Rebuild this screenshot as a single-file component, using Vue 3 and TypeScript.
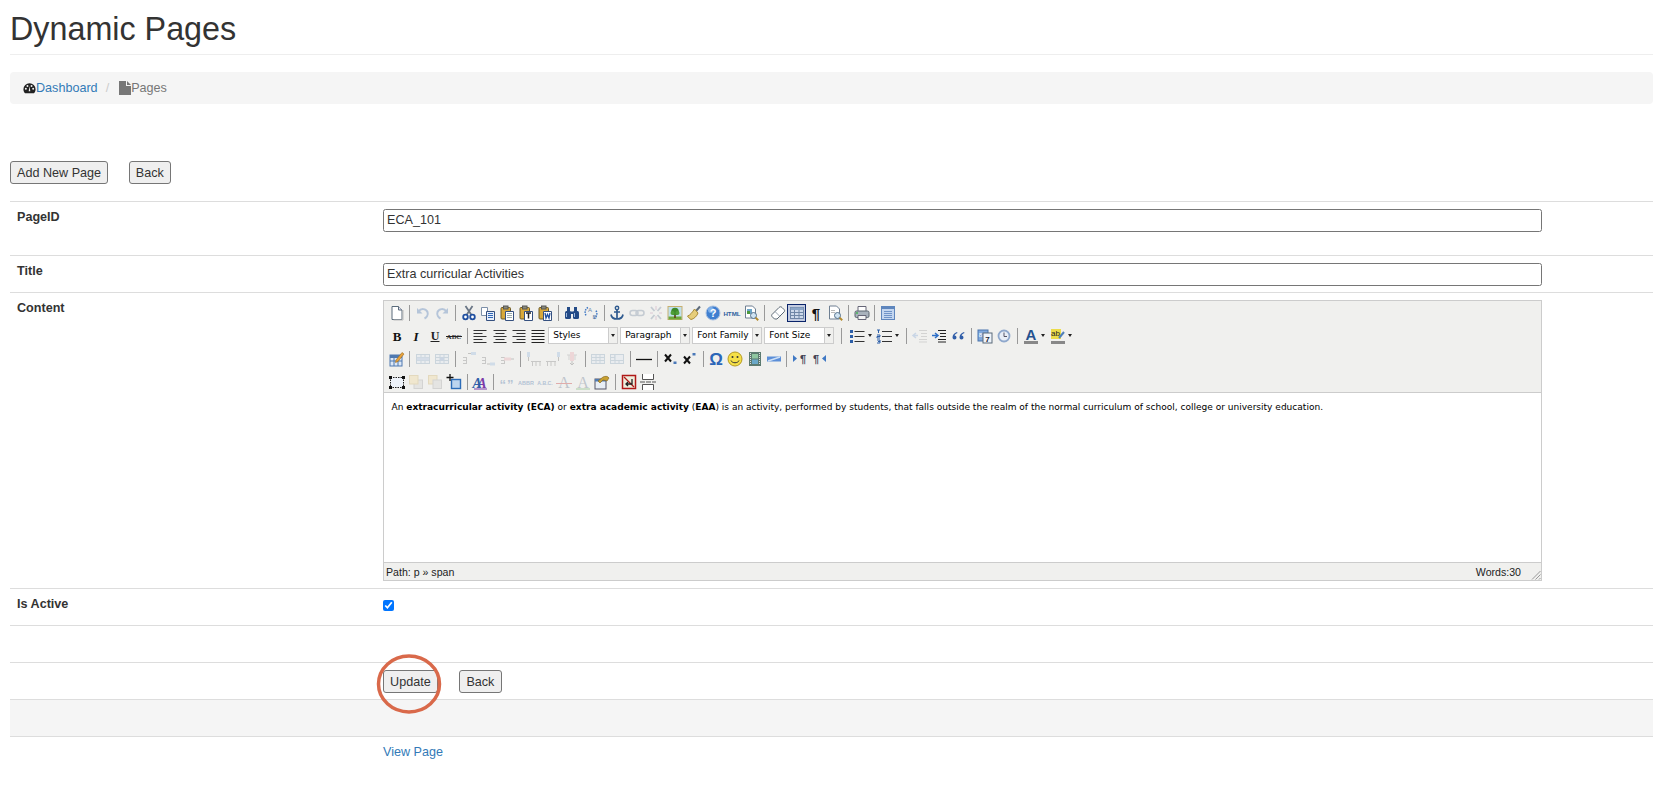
<script setup lang="ts">
type Item = { k: 'i'; n: string; off?: boolean; on?: boolean } | { k: 's' } | { k: 'sel'; t: string } | { k: 'arrow' }

const clip = (inner: string) =>
  `<rect x="2" y="2.5" width="9.5" height="11.5" rx="1" fill="#d9a93a" stroke="#6b5a28"/><rect x="4.5" y="1" width="4.5" height="3" fill="#8a8a7a" stroke="#555"/>${inner}`
const sheet = (fill = '#fff') =>
  `<path d="M6.5 6.5h8v9h-8z" fill="${fill}" stroke="#35507f"/>`
const mag = `<circle cx="10.5" cy="10.5" r="3" fill="#cfe3f2" stroke="#55708a"/><path d="M12.6 12.6l2.6 2.6" stroke="#b38a2d" stroke-width="2"/>`
const lines = (ys: number[], x: number, w: number, c = '#333') =>
  ys.map((y) => `<path d="M${x} ${y + 0.5}h${w}" stroke="${c}"/>`).join('')
const grid = `<rect x="1.5" y="3.5" width="13" height="9" fill="#dbe6f4" stroke="#7f9db9"/><path d="M1.5 6.5h13M1.5 9.5h13M6 3.5v9M10 3.5v9" stroke="#7f9db9"/>`
const ladder = (a: string) =>
  `<path d="M2 6.5h3M2 9.5h3M2 12.5h3M5.5 6v7" stroke="#777"/>${a}`

const icons: Record<string, string> = {
  new: `<path d="M3 1.5h6.5l3.5 3.5v9.5H3z" fill="#fff" stroke="#5a6b7b"/><path d="M9.5 1.5V5H13" fill="#dde" stroke="#5a6b7b"/><path d="M14 5v10H4.5" fill="none" stroke="#bbb"/>`,
  undo: `<path d="M3.5 6.5C6 3 11 3.5 12.5 7c1 3-1 5.5-3 6.5" fill="none" stroke="#3d6cb0" stroke-width="2"/><path d="M2 3v5.5h5.5z" fill="#3d6cb0"/>`,
  redo: `<path d="M12.5 6.5C10 3 5 3.5 3.5 7c-1 3 1 5.5 3 6.5" fill="none" stroke="#3d6cb0" stroke-width="2"/><path d="M14 3v5.5H8.5z" fill="#3d6cb0"/>`,
  cut: `<path d="M4.5 1l6 9M11.5 1l-6 9" stroke="#6a7686" stroke-width="1.8"/><circle cx="4.5" cy="12" r="2.3" fill="#fff" stroke="#1f4fa0" stroke-width="1.8"/><circle cx="11.5" cy="12" r="2.3" fill="#fff" stroke="#1f4fa0" stroke-width="1.8"/>`,
  copy: `<path d="M1.5 2.5h6v8h-6z" fill="#fff" stroke="#7c8fa8"/>${sheet('#e6eefa')}${lines([8, 10, 12], 8, 5, '#2f67b8')}`,
  paste: clip(`${sheet()}${lines([8, 10, 12], 8, 5, '#9aa')}`),
  ptext: clip(`${sheet()}<path d="M8 8h5M10.5 8v5.5" stroke="#222" stroke-width="1.5"/>`),
  pword: clip(`${sheet()}<path d="M8 8l1 5 1.5-3.5L12 13l1-5" fill="none" stroke="#1f4fa0" stroke-width="1.3"/>`),
  find: `<rect x="1" y="6" width="6" height="8" rx="1.5" fill="#234a86"/><rect x="9" y="6" width="6" height="8" rx="1.5" fill="#234a86"/><rect x="3" y="2" width="3" height="5" fill="#234a86"/><rect x="10" y="2" width="3" height="5" fill="#234a86"/><rect x="6" y="6.5" width="4" height="2.5" fill="#234a86"/><path d="M2.5 8v4M10.5 8v4" stroke="#9db7dc"/>`,
  replace: `<path d="M5 2.5c-3 1.5-3.5 5-2 8M11 13.5c3-1.5 3.5-5 2-8" fill="none" stroke="#3f78c4" stroke-width="1.5" stroke-dasharray="1.5 1"/><text x="5" y="6.5" font-size="6" fill="#6b85a8" font-family="Liberation Sans">A</text><text x="9.5" y="14" font-size="6" fill="#6b85a8" font-family="Liberation Sans">B</text>`,
  anchor: `<circle cx="8" cy="3" r="1.7" fill="none" stroke="#2f5a8f" stroke-width="1.4"/><path d="M8 4.5v9.5M5 7h6" stroke="#2f5a8f" stroke-width="1.7"/><path d="M2 9.5c.5 3 3 4.5 6 4.5s5.5-1.5 6-4.5" fill="none" stroke="#2f5a8f" stroke-width="1.7"/>`,
  link: `<rect x="1" y="5.5" width="8" height="5" rx="2.5" fill="none" stroke="#6a7f99" stroke-width="1.5"/><rect x="7" y="5.5" width="8" height="5" rx="2.5" fill="none" stroke="#6a7f99" stroke-width="1.5"/>`,
  unlink: `<path d="M3 2l3.5 4M13 2L9.5 6M3 14l3.5-4M13 14L9.5 10" stroke="#6a7f99" stroke-width="1.8"/><path d="M8 1v4M8 11v4M2 8h3M11 8h3" stroke="#a58" stroke-width=".8"/>`,
  image: `<rect x="1" y="1.5" width="14" height="13" fill="#bfe0ee" stroke="#c8b070"/><path d="M1.5 11.5h13v3h-13z" fill="#6fa83a"/><path d="M8 9v4" stroke="#5c3a18" stroke-width="1.6"/><circle cx="8" cy="6.5" r="3.8" fill="#3c8a2a"/><circle cx="5.5" cy="8" r="2" fill="#4f9f38"/><circle cx="10.5" cy="8" r="2" fill="#4f9f38"/>`,
  cleanup: `<path d="M10 6l4-4.5" stroke="#5d6b7b" stroke-width="2"/><path d="M8.5 4L12 8c-1 3-4 6-7 6.5-1-.5-2.5-2-3.5-3.5C4 10.5 6.5 7 8.5 4z" fill="#e6cd7a" stroke="#a98a35"/>`,
  help: `<circle cx="8" cy="8" r="7" fill="#3f7fd0" stroke="#a7bfe0"/><circle cx="6" cy="5" r="3" fill="#7fb0ea"/><text x="8" y="12.3" text-anchor="middle" font-size="11" font-weight="700" fill="#fff" font-family="Liberation Sans">?</text>`,
  html: `<text x="8" y="10.5" text-anchor="middle" font-size="6.2" font-weight="700" fill="#2c5f9e" font-family="Liberation Sans">HTML</text>`,
  code: `<path d="M2.5 1h7l3 3v9h-10z" fill="#fff" stroke="#6e7f92"/><path d="M4 4h5v5H4z" fill="#6da5c8"/><path d="M4 6h3v3H4z" fill="#4d9a3d"/>${mag}`,
  erase: `<path d="M2 9.5L9 2.5c1-1 2-1 3 0l2 2c.8.8.8 1.8 0 2.5L7 14H4.500L2 11.5c-.5-.5-.5-1.5 0-2z" fill="#fff" stroke="#5b6875"/><path d="M5 6.5l5 5" stroke="#9aa5b0"/>`,
  visual: `<rect x="1.5" y="2.5" width="13" height="11" fill="#cdd9ea" stroke="#6f86a6"/><rect x="1.5" y="2.5" width="13" height="2.5" fill="#8ca6c8"/><path d="M1.5 7.5h13M1.5 10.5h13M5.5 5v8.5M10 5v8.5" stroke="#6f86a6"/>`,
  para: `<text x="8" y="13.5" text-anchor="middle" font-size="15" font-weight="700" fill="#111" font-family="Liberation Sans">¶</text>`,
  preview: `<path d="M2.5 1h7l3 3v10h-10z" fill="#fff" stroke="#6e7f92"/>${lines([5, 7], 4, 4, '#bbb')}${mag}`,
  print: `<path d="M4 1.5h8v5H4z" fill="#fff" stroke="#667"/><rect x="1" y="6" width="14" height="6.5" rx="1.5" fill="#a9b2bc" stroke="#5c6670"/><path d="M4 10.5h8v4H4z" fill="#f4f4f4" stroke="#667"/><circle cx="3" cy="8" r=".9" fill="#39b54a"/>`,
  full: `<rect x="1.5" y="1.5" width="13" height="13" fill="#c3d6f0" stroke="#5f86bd"/><rect x="1.5" y="1.5" width="13" height="2.5" fill="#5f86bd"/>${lines([6, 8, 10, 12], 4, 8, '#6f93c8')}`,
  bold: `<text x="8" y="13" text-anchor="middle" font-size="13" font-weight="700" fill="#111" font-family="Liberation Serif">B</text>`,
  italic: `<text x="8" y="13" text-anchor="middle" font-size="13" font-weight="700" font-style="italic" fill="#111" font-family="Liberation Serif">I</text>`,
  under: `<text x="8" y="12" text-anchor="middle" font-size="12" font-weight="700" fill="#222" font-family="Liberation Serif">U</text><path d="M3.5 13.5h9" stroke="#222"/>`,
  strike: `<text x="8" y="11" text-anchor="middle" font-size="7" font-weight="700" fill="#333" font-family="Liberation Serif">ABC</text><path d="M0 8.5h16" stroke="#222"/>`,
  left: `<path d="M1.5 2.5h13M1.5 5.5h9M1.5 8.5h13M1.5 11.5h9M1.5 14.5h13" stroke="#333" stroke-width="1.2"/>`,
  center: `<path d="M1.5 2.5h13M3.5 5.5h9M1.5 8.5h13M3.5 11.5h9M1.5 14.5h13" stroke="#333" stroke-width="1.2"/>`,
  right: `<path d="M1.5 2.5h13M5.5 5.5h9M1.5 8.5h13M5.5 11.5h9M1.5 14.5h13" stroke="#333" stroke-width="1.2"/>`,
  just: `<path d="M1.5 2.5h13M1.5 5.5h13M1.5 8.5h13M1.5 11.5h13M1.5 14.5h13" stroke="#222" stroke-width="1.2"/>`,
  bullets: `<path d="M5.5 3.5h10M5.5 8.5h10M5.5 13.5h10" stroke="#333"/><rect x="1" y="2" width="3" height="3" fill="#2d5fa8"/><rect x="1" y="7" width="3" height="3" fill="#2d5fa8"/><rect x="1" y="12" width="3" height="3" fill="#2d5fa8"/>`,
  nums: `<path d="M6 3.5h10M6 8.5h10M6 13.5h10" stroke="#333"/><path d="M1 2h3M2.5 2v3M1 7h3v1.5H1V10h3M1 12h3v3H1M2 13.5h2" stroke="#2d5fa8" fill="none"/>`,
  outdent: `<path d="M7 2.5h8M9 5.5h6M9 8.5h6M7 11.5h8M7 14h8" stroke="#999"/><path d="M6 7.5H2M4 5L1 7.5 4 10" fill="none" stroke="#7aa2d6" stroke-width="1.5"/>`,
  indent: `<path d="M7 2.5h8M9 5.5h6M9 8.5h6M7 11.5h8M7 14h8" stroke="#222" stroke-width="1.2"/><path d="M1 7.5h5M4 5l3 2.5L4 10" fill="none" stroke="#2d6fc8" stroke-width="1.5"/>`,
  quote: `<path d="M7 4C4 5 2.5 7 2.5 9.5a2 2 0 1 0 2-2C5 6.5 6 5.5 7.5 5zM14 4c-3 1-4.5 3-4.5 5.5a2 2 0 1 0 2-2c.5-1 1.5-2 3-2.5z" fill="#2f5da8"/>`,
  date: `<rect x="1" y="2" width="10" height="11" fill="#7fa7dc" stroke="#4a74ad"/><rect x="6" y="5" width="9" height="10" fill="#eef3fa" stroke="#5a6a7a"/><text x="10.5" y="13.5" text-anchor="middle" font-size="8" font-weight="700" fill="#223" font-family="Liberation Sans">7</text><text x="3.5" y="9" text-anchor="middle" font-size="6" fill="#fff" font-family="Liberation Sans">8</text>`,
  time: `<circle cx="8" cy="8" r="5.5" fill="#e8eef7" stroke="#8fa8cc" stroke-width="1.8"/><path d="M8 4.5V8.5h3" fill="none" stroke="#556" stroke-width="1"/>`,
  fore: `<text x="8" y="12" text-anchor="middle" font-size="15" font-weight="700" fill="#24518f" font-family="Liberation Sans">A</text><rect x="1" y="13" width="14" height="3" fill="#888"/>`,
  back: `<rect x="1" y="1" width="10" height="10" fill="#ecdc4a"/><text x="5.5" y="8" text-anchor="middle" font-size="8" fill="#222" font-family="Liberation Sans">ab</text><path d="M9 10l5-6" stroke="#4f7fb8" stroke-width="2"/><rect x="1" y="13" width="14" height="3" fill="#888"/>`,
  tedit: `<rect x="1" y="4" width="12" height="11" fill="#dde8f6" stroke="#4f79b0"/><rect x="1" y="4" width="12" height="3" fill="#4f79b0"/><path d="M1 10h12M5 7v8M9 7v8" stroke="#4f79b0"/><path d="M7 9l6-7.5 2 1.5-6 7.5-2.5 1z" fill="#e8a23a" stroke="#9a6a20" stroke-width=".6"/>`,
  trow: `${grid}<path d="M2 6.5h12v3H2z" fill="#9db8dc"/>`,
  tcell: `${grid}<path d="M6 6.5h4v3H6z" fill="#7f9fcf"/>`,
  rbefore: `${ladder('')}<path d="M7 2.5h4" stroke="#666"/><rect x="10" y="1" width="5" height="3" fill="#8fb3de"/>`,
  rafter: `${ladder('')}<path d="M7 13h3" stroke="#666"/><rect x="10" y="11.5" width="5" height="3" fill="#8fb3de"/>`,
  rdel: `${ladder('')}<rect x="5" y="6.5" width="7" height="3" fill="#e8a0a8"/><path d="M12 8h3" stroke="#666"/>`,
  cbefore: `<path d="M5 10.5h10M6.5 10.5V15M10 10.5V15M14 10.5V15" stroke="#777"/><rect x="1" y="1" width="3" height="5" fill="#8fb3de"/><path d="M2.5 6v4" stroke="#666"/>`,
  cafter: `<path d="M1 10.5h10M2.5 10.5V15M6 10.5V15M10 10.5V15" stroke="#777"/><rect x="12" y="1" width="3" height="5" fill="#8fb3de"/><path d="M13.5 6v4" stroke="#666"/>`,
  cdel: `<path d="M3 4h10M5 4v5M11 4v5" stroke="#999"/><rect x="6" y="1" width="4" height="9" fill="#e8a0a8"/><path d="M8 10v4M6 12l2 2 2-2" fill="none" stroke="#666"/>`,
  tsplit: grid,
  tmerge: `${grid}<rect x="6" y="3.5" width="8.5" height="6" fill="#dbe6f4" stroke="#7f9db9"/>`,
  hr: `<path d="M0 8.5h16" stroke="#111" stroke-width="1.3"/>`,
  sub: `<path d="M2 3.5l6 7M8 3.5l-6 7" stroke="#111" stroke-width="2"/><rect x="10.5" y="10.5" width="3" height="2.5" fill="#4a78b8"/>`,
  sup: `<path d="M2 5.5l6 7M8 5.5l-6 7" stroke="#111" stroke-width="2"/><rect x="10.5" y="2" width="3" height="2.5" fill="#4a78b8"/>`,
  omega: `<text x="8" y="14" text-anchor="middle" font-size="17" font-weight="700" fill="#2c66b8" font-family="Liberation Sans">Ω</text>`,
  smile: `<circle cx="8" cy="8" r="7" fill="#f5e048" stroke="#b59a20"/><circle cx="5.5" cy="6" r="1" fill="#333"/><circle cx="10.5" cy="6" r="1" fill="#333"/><path d="M4 9.5c1 3 7 3 8 0" fill="none" stroke="#333"/>`,
  media: `<rect x="2" y="1" width="12" height="14" fill="#5c7a70"/><rect x="5" y="3" width="6" height="4.5" fill="#8fc6a0"/><rect x="5" y="8.5" width="6" height="4.5" fill="#6aa8c8"/><path d="M3.5 2v12M12.5 2v12" stroke="#ddd" stroke-dasharray="1 1"/>`,
  nbsp: `<rect x="1" y="5.5" width="14" height="5" fill="#5c8fd8"/><path d="M2 10l12-4" stroke="#cfe0f6" stroke-width="1.5"/>`,
  ltr: `<path d="M1 4l4 3.5L1 11z" fill="#3f78c4"/><text x="11" y="12" text-anchor="middle" font-size="11" font-weight="700" fill="#445" font-family="Liberation Sans">¶</text>`,
  rtl: `<text x="5" y="12" text-anchor="middle" font-size="11" font-weight="700" fill="#445" font-family="Liberation Sans">¶</text><path d="M15 4l-4 3.5L15 11z" fill="#3f78c4"/>`,
  layer: `<rect x="1.5" y="3.5" width="13" height="10" fill="#eef3fa" stroke="#222" stroke-dasharray="1.5 1"/><path d="M0 2h3v3H0zM13 2h3v3h-3zM0 12h3v3H0zM13 12h3v3h-3z" fill="#111"/>`,
  fwd: `<rect x="6" y="6" width="8.5" height="8.5" fill="#ccc" stroke="#999"/><rect x="1.5" y="1.5" width="8.5" height="8.5" fill="#f0d790" stroke="#c9aa5a"/>`,
  bwd: `<rect x="1.5" y="1.5" width="8.5" height="8.5" fill="#f0d790" stroke="#c9aa5a"/><rect x="6" y="6" width="8.5" height="8.5" fill="#ccc" stroke="#999"/>`,
  abs: `<rect x="5.5" y="5.5" width="9" height="9" fill="#bcd4ee" stroke="#2c6cb8" stroke-width="1.4"/><path d="M4 0v7M0.5 3.5h7" stroke="#111" stroke-width="1.3"/>`,
  style: `<defs><linearGradient id="aa" gradientUnits="userSpaceOnUse" x1="1" y1="0" x2="15" y2="0"><stop offset="0" stop-color="#2f5da8"/><stop offset=".5" stop-color="#2f5da8"/><stop offset=".6" stop-color="#7a3aa8"/></linearGradient></defs><text x="0.5" y="14" font-size="14" font-weight="700" font-style="italic" letter-spacing="-4.5" fill="url(#aa)" font-family="Liberation Serif">AA</text><path d="M2 15h13" stroke="#7a3aa8"/>`,
  cite: `<text x="8" y="15" text-anchor="middle" font-size="13" font-weight="700" letter-spacing="1" fill="#3f6aa0" font-family="Liberation Sans">“”</text>`,
  abbr: `<text x="8" y="10.5" text-anchor="middle" font-size="5.5" font-weight="700" fill="#2c5f9e" font-family="Liberation Sans">ABBR</text>`,
  acro: `<text x="8" y="10.5" text-anchor="middle" font-size="5.2" font-weight="700" fill="#2c5f9e" font-family="Liberation Sans">A.B.C.</text>`,
  del: `<text x="8" y="14" text-anchor="middle" font-size="16" fill="#5b6b85" font-family="Liberation Serif">A</text><path d="M0 9.5h16" stroke="#c02020"/>`,
  ins: `<text x="8" y="13.5" text-anchor="middle" font-size="16" fill="#5b6b85" font-family="Liberation Serif">A</text><path d="M1 15h14" stroke="#4aa040" stroke-width="1.3"/>`,
  attrib: `<rect x="1" y="5" width="11" height="10" fill="#e8eef6" stroke="#556"/><rect x="1" y="5" width="11" height="2.5" fill="#4f79b0"/><path d="M4 7l5-4c2-1 5-1 6 1l-2 3-4-1-3 3z" fill="#c8a030" stroke="#7a6020" stroke-width=".6"/>`,
  nonb: `<rect x="1.5" y="1.5" width="13" height="13" fill="#eed" stroke="#b01818" stroke-width="1.5"/><path d="M3 3l10 10" stroke="#b01818" stroke-width="1.3"/><path d="M11 5v5H5M7 8l-2 2 2 2" fill="none" stroke="#222" stroke-width="1.3"/>`,
  pbreak: `<path d="M2.5 0v5.5h11V0M2.5 16v-5.5h11V16" fill="#fff" stroke="#555"/><path d="M0 8h16" stroke="#555" stroke-dasharray="5 1"/>`,
}

const parse = (spec: string): Item[] =>
  spec.split(' ').map((t) => {
    if (t === '|') return { k: 's' }
    if (t === 'v') return { k: 'arrow' }
    if (t.startsWith('sel:')) return { k: 'sel', t: t.slice(4).replace('_', ' ') }
    if (t.endsWith('*')) return { k: 'i', n: t.slice(0, -1), off: true }
    if (t.endsWith('!')) return { k: 'i', n: t.slice(0, -1), on: true }
    return { k: 'i', n: t }
  })

const rows: Item[][] = [
  'new | undo* redo* | cut copy paste ptext pword | find replace | anchor link* unlink* image cleanup help html code | erase visual! para preview | print | full',
  'bold italic under strike | left center right just sel:Styles sel:Paragraph sel:Font_Family sel:Font_Size | bullets v nums v | outdent* indent quote | date time | fore v back v',
  'tedit | trow* tcell* | rbefore* rafter* rdel* | cbefore* cafter* cdel* | tsplit* tmerge* | hr | sub sup | omega smile media nbsp | ltr rtl',
  'layer fwd* bwd* abs | style | cite* abbr* acro* del* ins* attrib | nonb pbreak',
].map(parse)
</script>

<template>
  <div class="page">
    <h1 class="title">Dynamic Pages</h1>

    <nav class="crumbs">
      <svg class="crumb-ic" viewBox="0 0 16 16">
        <path d="M8 2a7.5 7.5 0 0 0-7.5 7.5c0 2 .8 3.8 2 5h11c1.2-1.2 2-3 2-5A7.5 7.5 0 0 0 8 2z" fill="#222" />
        <circle cx="3.5" cy="9" r="1.2" fill="#f5f5f5" /><circle cx="5.5" cy="5.5" r="1.2" fill="#f5f5f5" />
        <circle cx="10.5" cy="5.5" r="1.2" fill="#f5f5f5" /><circle cx="12.5" cy="9" r="1.2" fill="#f5f5f5" />
        <path d="M7 12l1-6.5 1 6.5z" fill="#f5f5f5" />
      </svg>
      <a class="link">Dashboard</a>
      <span class="slash">/</span>
      <svg class="crumb-ic page-ic" viewBox="0 0 12 14"><path d="M0 0h7v5h5v9H0zM8 0l4 4H8z" fill="#777" /></svg>
      <span class="muted">Pages</span>
    </nav>

    <div class="actions">
      <button class="btn">Add New Page</button>
      <button class="btn">Back</button>
    </div>

    <div class="row r-id">
      <label class="lbl">PageID</label>
      <div class="val"><input class="txt" value="ECA_101" /></div>
    </div>
    <div class="row r-title">
      <label class="lbl">Title</label>
      <div class="val"><input class="txt" value="Extra curricular Activities" /></div>
    </div>
    <div class="row r-content">
      <label class="lbl">Content</label>
      <div class="val">
        <div class="editor">
          <div class="toolbar">
            <div v-for="(row, i) in rows" :key="i" class="tb-row">
              <template v-for="(it, j) in row" :key="j">
                <span v-if="it.k === 's'" class="sep"></span>
                <span v-else-if="it.k === 'arrow'" class="drop"></span>
                <span v-else-if="it.k === 'sel'" class="sel">
                  <span class="sel-t">{{ it.t }}</span><span class="sel-a"></span>
                </span>
                <span v-else class="tb-btn" :class="{ off: it.off, on: it.on }">
                  <svg class="ic" viewBox="0 0 16 16" v-html="icons[it.n]"></svg>
                </span>
              </template>
            </div>
          </div>
          <div class="body">
            <p class="copy">An <b>extracurricular activity (ECA)</b> or <b>extra academic activity</b> (<b>EAA</b>) is an activity, performed by students, that falls outside the realm of the normal curriculum of school, college or university education.</p>
          </div>
          <div class="status">
            <span>Path: p » span</span>
            <span class="words">Words:30</span>
            <svg class="grip" viewBox="0 0 10 10"><path d="M9.5 1L1 9.5M9.5 4.5L4.5 9.5M9.5 8L8 9.5" stroke="#999" fill="none" /></svg>
          </div>
        </div>
      </div>
    </div>
    <div class="row r-active">
      <label class="lbl">Is Active</label>
      <div class="val"><input class="chk" type="checkbox" checked /></div>
    </div>
    <div class="row r-empty"></div>
    <div class="row r-btns">
      <div></div>
      <div class="val btns">
        <span class="ring-wrap">
          <button class="btn">Update</button>
          <svg class="ring" viewBox="0 0 66 60"><ellipse cx="33" cy="30" rx="30.5" ry="28" fill="none" stroke="#d9694a" stroke-width="3.5" /></svg>
        </span>
        <button class="btn">Back</button>
      </div>
    </div>
    <div class="row r-empty shade"></div>
    <div class="row r-last">
      <div></div>
      <div class="val"><a class="link">View Page</a></div>
    </div>
  </div>
</template>

<style scoped>
.page {
  padding-left: 10px;
  font: 12.6px/18px "Liberation Sans", Arial, sans-serif;
  color: #333;
  height: 785px;
  box-sizing: border-box;
  overflow: hidden;
}
.title {
  margin: 0;
  height: 55px;
  box-sizing: border-box;
  padding-top: 11px;
  border-bottom: 1px solid #eee;
  font-size: 32.3px;
  line-height: 36px;
  font-weight: 400;
  color: #333;
}
.crumbs {
  margin-top: 17px;
  height: 32px;
  padding: 0 13px;
  background: #f5f5f5;
  border-radius: 4px;
  display: flex;
  align-items: center;
}
.crumb-ic { width: 13px; height: 14px; flex: none; }
.page-ic { width: 12px; }
.slash { color: #ccc; margin: 0 10px 0 8px; }
.link { color: #337ab7; }
.muted { color: #777; }
.actions {
  margin-top: 57px;
  height: 40px;
  display: flex;
  align-items: flex-start;
  gap: 20.5px;
}
.btn {
  height: 23px;
  padding: 0 6.1px;
  font: 12.6px "Liberation Sans", Arial, sans-serif;
  color: #333;
  background: #efefef;
  border: 1px solid #767676;
  border-radius: 3px;
  box-sizing: border-box;
}
.row {
  display: grid;
  grid-template-columns: 373px 1159px;
  border-top: 1px solid #ddd;
  box-sizing: border-box;
}
.r-id { height: 54px; }
.r-title { height: 37px; }
.r-content { height: 296px; }
.r-active { height: 37px; }
.r-empty { height: 37px; }
.r-btns { height: 37px; }
.r-last { height: 37px; }
.shade { background: #f5f5f5; }
.lbl { padding: 6px 0 0 7px; font-weight: 700; }
.val { padding-top: 7px; }
.r-last .val { padding-top: 6px; }
.txt {
  display: block;
  width: 100%;
  height: 23px;
  box-sizing: border-box;
  padding: 0 3px 1px;
  font: 12.6px "Liberation Sans", Arial, sans-serif;
  color: #333;
  border: 1px solid #767676;
  border-radius: 2.5px;
  background: #fff;
  outline: none;
}
.chk { display: block; margin: 4px 0 0; width: 11px; height: 11px; }
.btns { display: flex; align-items: flex-start; }
.ring-wrap { position: relative; display: block; margin-right: 21.5px; }
.ring-wrap .btn { display: block; }
.ring {
  position: absolute;
  left: -7px;
  top: -16px;
  width: 66px;
  height: 60px;
  overflow: visible;
  pointer-events: none;
}
.editor {
  height: 281px;
  box-sizing: border-box;
  border: 1px solid #ccc;
  display: flex;
  flex-direction: column;
}
.toolbar {
  height: 92px;
  padding: 0 0 0 3px;
  box-sizing: border-box;
  background: #f0f0ee;
  border-bottom: 1px solid #ccc;
  flex: none;
}
.tb-row { height: 23px; display: flex; align-items: center; }
.tb-btn {
  width: 19.1px;
  height: 18px;
  flex: none;
  display: flex;
  align-items: center;
  justify-content: center;
  box-sizing: border-box;
}
.off .ic { opacity: 0.32; }
.on { background: #c2cbe0; outline: 1px solid #0a246a; outline-offset: -1px; }
.ic { width: 16px; height: 16px; display: block; overflow: visible; }
.sep { width: 1px; height: 16px; background: #999; margin: 0 3.25px; flex: none; }
.sel + .sep { margin: 0 6px 0 5.5px; }
.drop + .sep { margin-left: 4.5px; }
.drop {
  width: 8px;
  height: 3px;
  flex: none;
  position: relative;
}
.drop::after {
  content: "";
  position: absolute;
  left: 1px;
  top: 0;
  border-top: 3px solid #222;
  border-left: 2.5px solid transparent;
  border-right: 2.5px solid transparent;
}
.sel {
  width: 70px;
  height: 17px;
  margin-left: 1px;
  margin-right: 1px;
  flex: none;
  display: flex;
  background: #fff;
  border: 1px solid #ccc;
  box-sizing: border-box;
  font: 9px/15px "DejaVu Sans", Verdana, sans-serif;
  color: #000;
}
.sel-t { flex: 1; padding-left: 4px; white-space: nowrap; overflow: hidden; }
.sel-a {
  width: 8px;
  flex: none;
  background: #f0f0ee;
  border-left: 1px solid #ccc;
  position: relative;
}
.sel-a::after {
  content: "";
  position: absolute;
  left: 1.5px;
  top: 6px;
  border-top: 3px solid #222;
  border-left: 2.5px solid transparent;
  border-right: 2.5px solid transparent;
}
.body { flex: 1; background: #fff; min-height: 0; padding: 7px 0 0 7.5px; }
.copy {
  margin: 0;
  font: 9.04px/14px "DejaVu Sans", Verdana, sans-serif;
  color: #000;
  white-space: nowrap;
}
.copy b { font-weight: 700; }
.status {
  flex: none;
  height: 18px;
  background: #f0f0ee;
  border-top: 1px solid #ccc;
  box-sizing: border-box;
  display: flex;
  align-items: center;
  justify-content: space-between;
  padding: 0 20px 0 2px;
  font: 10.6px "Liberation Sans", Arial, sans-serif;
  color: #222;
  position: relative;
}
.grip { position: absolute; right: 0; bottom: 0; width: 10px; height: 10px; }
</style>

<style>
html, body { background: #fff; overflow: hidden; }
</style>
